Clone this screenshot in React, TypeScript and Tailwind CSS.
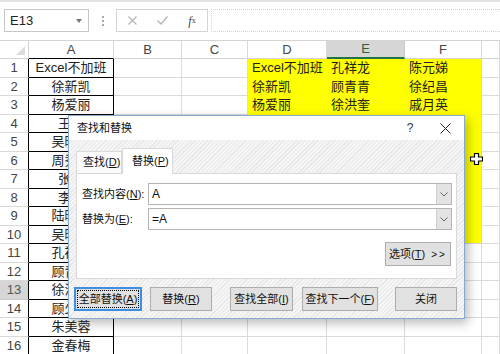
import React from 'react';

const font = { fontFamily: '"Liberation Sans", "Noto Sans CJK SC", sans-serif' };

const cols = ['A', 'B', 'C', 'D', 'E', 'F', ''];

const colA = [
  'Excel不加班', '徐新凯', '杨爱丽', '王明', '吴晓燕', '周秀英', '张铭', '李华',
  '陆晓东', '吴晓红', '孔祥龙', '顾青青', '徐洪奎', '顾少华', '朱美蓉', '金春梅',
];

const yellowData: Record<number, string[]> = {
  1: ['Excel不加班', '孔祥龙', '陈元娣'],
  2: ['徐新凯', '顾青青', '徐纪昌'],
  3: ['杨爱丽', '徐洪奎', '戚月英'],
};

const rows = Array.from({ length: 16 }, (_, i) => i + 1);

function Cell({ row, col }: { row: number; col: number }) {
  // col: 0=A ... 6=G
  if (col === 0) {
    return (
      <div className="h-[18.5px] border-r border-b border-black flex items-center justify-center text-[13px] text-[#222] overflow-hidden whitespace-nowrap">
        {colA[row - 1]}
      </div>
    );
  }
  const yellow = col >= 3 && col <= 5 && row <= 10;
  if (yellow) {
    const text = yellowData[row]?.[col - 3] ?? '';
    const edge = col === 5 ? 'border-r-[#d4d4d4]' : 'border-r-[#ffff00]';
    const bottom = row === 10 ? 'border-b-[#d4d4d4]' : 'border-b-[#ffff00]';
    return (
      <div className={`h-[18.5px] bg-[#ffff00] border-r border-b ${edge} ${bottom} flex items-center pl-[4px] text-[13px] text-[#222] whitespace-nowrap overflow-visible`}>
        {text}
      </div>
    );
  }
  return <div className="h-[18.5px] border-r border-b border-[#dadada]" />;
}

function Btn({ w, children, focus }: { w: string; children: React.ReactNode; focus?: boolean }) {
  if (focus) {
    return (
      <div className={`${w} h-[24px] border-2 border-[#3d8ee0] bg-[#e1e1e1] p-[1px]`}>
        <div className="w-full h-full border border-dotted border-black flex items-center justify-center text-[11px] text-[#111]">
          {children}
        </div>
      </div>
    );
  }
  return (
    <div className={`${w} h-[24px] border border-[#adadad] bg-[#e1e1e1] flex items-center justify-center text-[11px] text-[#111]`}>
      {children}
    </div>
  );
}

function Combo({ value }: { value: string }) {
  return (
    <div className="flex-1 h-[22px] border border-[#b4b4b4] bg-white flex items-center">
      <span className="flex-1 pl-[3px] text-[12px] text-[#111]">{value}</span>
      <div className="w-[15px] h-full bg-[#e3e3e3] border-l border-[#cfcfcf] flex items-center justify-center">
        <svg width="8" height="5" viewBox="0 0 8 5">
          <path d="M0.5 0.5 L4 4 L7.5 0.5" fill="none" stroke="#666" strokeWidth="1" />
        </svg>
      </div>
    </div>
  );
}

function Dialog() {
  return (
    <div
      className="absolute left-[68px] top-[115px] w-[397px] h-[204px] border border-[#86a9d2] bg-white flex flex-col shadow-[3px_4px_10px_rgba(0,0,0,0.28)]"
      style={font}
    >
      <div className="h-[24px] bg-white flex items-center pl-[8px] text-[11px] text-[#111]">
        <span>查找和替换</span>
        <span className="ml-auto text-[12px] text-[#333] w-[20px] text-center">?</span>
        <span className="w-[18px]" />
        <svg className="mr-[13px] ml-[2px]" width="11" height="11" viewBox="0 0 11 11">
          <path d="M0.5 0.5 L10.5 10.5 M10.5 0.5 L0.5 10.5" stroke="#222" strokeWidth="1" />
        </svg>
      </div>
      <div className="flex-1 px-[7px] pt-[7px] bg-[repeating-linear-gradient(135deg,#f5f5f5_0px,#f5f5f5_2px,#e7e7e7_2px,#e7e7e7_3px)]">
        <div className="flex items-end h-[26px]">
          <div className="w-[46px] h-[22px] border border-b-0 border-[#d9d9d9] bg-[#fafafa] flex items-center pl-[6px] text-[11px] text-[#111]">
            查找(<u>D</u>)
          </div>
          <div className="w-[51px] h-[26px] border border-b-0 border-[#d9d9d9] bg-white flex items-center pl-[9px] text-[11px] text-[#111] relative z-10 -mb-[1px]">
            替换(<u>P</u>)
          </div>
        </div>
        <div className="h-[106px] bg-white border border-[#d9d9d9] pt-[9px] pl-[5px] pr-[4px] flex flex-col">
          <div className="flex items-center">
            <span className="w-[66px] text-[11px] text-[#111]">查找内容(<u>N</u>):</span>
            <Combo value="A" />
          </div>
          <div className="flex items-center mt-[3px]">
            <span className="w-[66px] text-[11px] text-[#111]">替换为(<u>E</u>):</span>
            <Combo value="=A" />
          </div>
          <div className="flex justify-end mt-[12px] pr-[1px]">
            <Btn w="w-[66px]">
              <span>选项(<u>T</u>)</span>
              <span className="ml-[6px] tracking-[2px] text-[10px]">&gt;&gt;</span>
            </Btn>
          </div>
        </div>
        <div className="flex mt-[8px] -ml-[2px]">
          <Btn w="w-[69px]" focus>全部替换(<u>A</u>)</Btn>
          <div className="ml-[8px]"><Btn w="w-[62px]">替换(<u>R</u>)</Btn></div>
          <div className="ml-[18px]"><Btn w="w-[63px]">查找全部(<u>I</u>)</Btn></div>
          <div className="ml-[9px]"><Btn w="w-[76px]">查找下一个(<u>F</u>)</Btn></div>
          <div className="ml-[17px]"><Btn w="w-[62px]">关闭</Btn></div>
        </div>
      </div>
    </div>
  );
}

export default function App() {
  return (
    <div className="w-[500px] h-[354px] bg-white relative overflow-hidden" style={font}>
      {/* Formula bar */}
      <div className="h-[40px] border-t-2 border-[#e4e4e4] flex items-start pt-[7px]">
        <div className="ml-[4px] w-[85px] h-[23px] border border-[#c6c6c6] flex items-center pl-[5px] text-[13px] text-[#222]">
          <span className="flex-1">E13</span>
          <svg className="mr-[6px]" width="6" height="4" viewBox="0 0 6 4">
            <path d="M0 0 L6 0 L3 4 Z" fill="#777" />
          </svg>
        </div>
        <div className="w-[27px] h-[23px] flex flex-col items-center justify-center gap-[2px]">
          <span className="w-[2px] h-[2px] bg-[#a8a8a8]" />
          <span className="w-[2px] h-[2px] bg-[#a8a8a8]" />
          <span className="w-[2px] h-[2px] bg-[#a8a8a8]" />
        </div>
        <div className="w-[92px] h-[23px] border border-[#d4d4d4] flex items-center">
          <span className="w-[30px] flex justify-center">
            <svg width="9" height="9" viewBox="0 0 9 9">
              <path d="M0.5 0.5 L8.5 8.5 M8.5 0.5 L0.5 8.5" stroke="#b5b5b5" strokeWidth="1.2" />
            </svg>
          </span>
          <span className="w-[30px] flex justify-center">
            <svg width="11" height="9" viewBox="0 0 11 9">
              <path d="M0.5 4.5 L4 8 L10.5 0.5" fill="none" stroke="#b5b5b5" strokeWidth="1.3" />
            </svg>
          </span>
          <span className="w-[30px] flex justify-center text-[12px] italic text-[#444]" style={{ fontFamily: '"Liberation Serif", serif' }}>
            f<span className="text-[8px] not-italic mt-[3px]">x</span>
          </span>
        </div>
        <div className="flex-1 ml-[3px] h-[23px] border border-r-0 border-[#d4d4d4] border-t-[#cfcfcf] border-dotted" />
      </div>

      {/* Sheet grid */}
      <div className="grid grid-cols-[29px_85px_68px_66px_79px_78px_77px_18px] border-t border-[#d4d4d4]">
        <div className="h-[18px] border-r border-b border-[#d4d4d4] relative">
          <svg className="absolute right-[3px] bottom-[3px]" width="9" height="9" viewBox="0 0 9 9">
            <path d="M9 0 L9 9 L0 9 Z" fill="#dcdcdc" />
          </svg>
        </div>
        {cols.map((c, i) => {
          if (c === 'E') {
            return (
              <div key={i} className="h-[18px] bg-[#d6d6d6] border-r border-r-[#c8c8c8] border-b-2 border-b-[#217346] flex items-center justify-center text-[13px] text-[#2f5f3a]">
                {c}
              </div>
            );
          }
          const bottom = c === 'A' ? 'border-b-black' : 'border-b-[#d4d4d4]';
          return (
            <div key={i} className={`h-[18px] border-r border-r-[#d9d9d9] border-b ${bottom} flex items-center justify-center text-[13px] text-[#444]`}>
              {c}
            </div>
          );
        })}
        {rows.map((r) => (
          <React.Fragment key={r}>
            {r === 13 ? (
              <div className="h-[18.5px] bg-[#d6d6d6] border-r border-r-black border-b border-b-[#c8c8c8] flex items-center justify-center text-[13px] text-[#555]">
                {r}
              </div>
            ) : (
              <div className="h-[18.5px] border-r border-r-black border-b border-b-[#d9d9d9] flex items-center justify-center text-[13px] text-[#444]">
                {r}
              </div>
            )}
            {[0, 1, 2, 3, 4, 5, 6].map((c) => (
              <Cell key={c} row={r} col={c} />
            ))}
          </React.Fragment>
        ))}
      </div>

      <Dialog />

      {/* move cursor */}
      <svg className="absolute left-[470px] top-[153px]" width="13" height="12" viewBox="0 0 13 12">
        <path
          d="M4.5 0.5 H8.5 V4 H12.5 V8 H8.5 V11.5 H4.5 V8 H0.5 V4 H4.5 Z"
          fill="#fff"
          stroke="#000"
          strokeWidth="1.2"
          strokeLinejoin="round"
        />
      </svg>
    </div>
  );
}
